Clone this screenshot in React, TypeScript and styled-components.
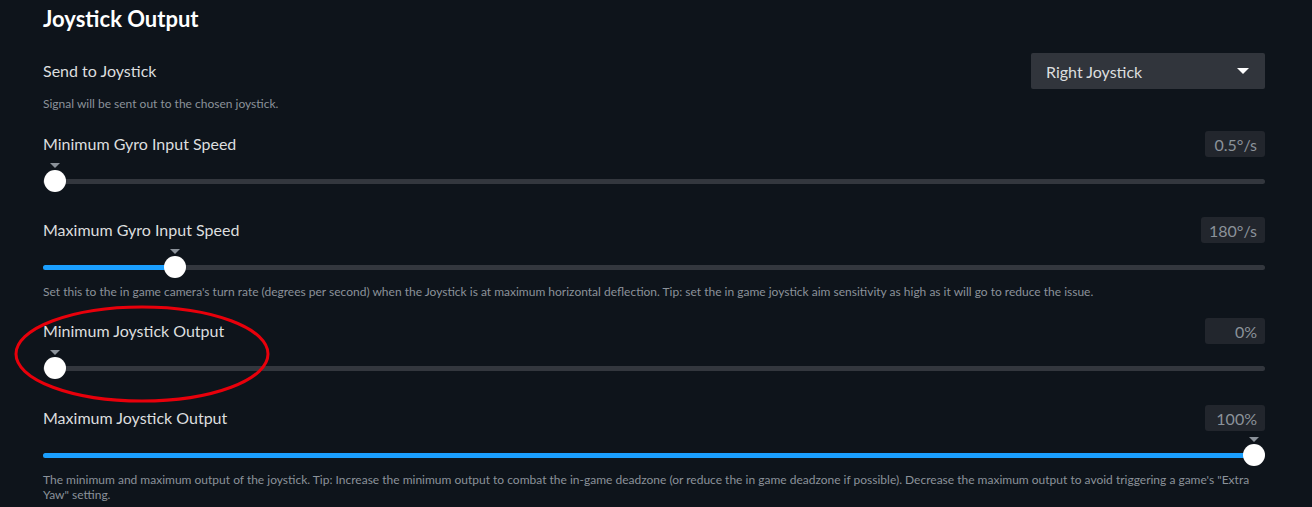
import React from "react";
import styled, { createGlobalStyle } from "styled-components";

const GlobalStyle = createGlobalStyle`
  html, body { margin: 0; padding: 0; background: #0e141b; }
  body { font-family: "Lato", "Noto Sans", sans-serif; }
  #root { width: 1312px; height: 507px; overflow: hidden; }
`;

const Page = styled.div`
  position: relative;
  width: 1312px;
  height: 507px;
  box-sizing: border-box;
  padding: 0 47px 0 43px;
  background: #0e141b;
  display: flex;
  flex-direction: column;
`;

const Title = styled.h1`
  margin: 0;
  padding-top: 6px;
  font-size: 22px;
  line-height: 26px;
  font-weight: 700;
  color: #ffffff;
`;

const Block = styled.section<{ $top: number }>`
  display: flex;
  flex-direction: column;
  margin-top: ${(p) => p.$top}px;
`;

const HeaderRow = styled.div<{ $h: number }>`
  display: flex;
  align-items: center;
  justify-content: space-between;
  height: ${(p) => p.$h}px;
`;

const Label = styled.div`
  font-size: 16px;
  line-height: 20px;
  color: #dcdedf;
`;

const Desc = styled.div<{ $top: number }>`
  margin-top: ${(p) => p.$top}px;
  font-size: 12px;
  line-height: 15px;
  color: #8b929a;
`;

const Dropdown = styled.div`
  width: 234px;
  height: 36px;
  box-sizing: border-box;
  padding: 0 16px 0 15px;
  background: #31353c;
  border-radius: 2px;
  display: flex;
  align-items: center;
  justify-content: space-between;
  font-size: 16px;
  color: #dcdedf;
`;

const Caret = styled.div`
  width: 0;
  height: 0;
  border-left: 6px solid transparent;
  border-right: 6px solid transparent;
  border-top: 6px solid #ffffff;
`;

const ValueBox = styled.div`
  min-width: 60px;
  height: 26px;
  box-sizing: border-box;
  padding: 0 8px;
  background: #22262d;
  border-radius: 3px;
  display: flex;
  align-items: center;
  justify-content: flex-end;
  font-size: 16px;
  color: #8b929a;
`;

const SliderArea = styled.div`
  position: relative;
  margin-top: 13px;
  height: 22px;
  display: flex;
  align-items: center;
`;

const Track = styled.div`
  position: relative;
  flex: 1;
  height: 5px;
  border-radius: 3px;
  background: #33373e;
`;

const Fill = styled.div`
  position: absolute;
  left: 0;
  top: 0;
  bottom: 0;
  border-radius: 3px;
  background: #1a9fff;
`;

const Thumb = styled.div`
  position: absolute;
  top: 0;
  width: 22px;
  height: 22px;
  margin-left: -11px;
  border-radius: 50%;
  background: #ffffff;
  &::before {
    content: "";
    position: absolute;
    left: 6px;
    top: -7px;
    border-left: 5px solid transparent;
    border-right: 5px solid transparent;
    border-top: 5px solid #8b929a;
  }
`;

const Annotation = styled.svg`
  position: absolute;
  left: 0;
  top: 0;
  pointer-events: none;
`;

const TRACK_W = 1222;

function Slider({ frac }: { frac: number }) {
  const center = 12 + frac * (TRACK_W - 23);
  return (
    <SliderArea>
      <Track>
        <Fill style={{ width: frac > 0 ? center : 0 }} />
      </Track>
      <Thumb style={{ left: center }} />
    </SliderArea>
  );
}

function SliderSetting({
  label,
  value,
  frac,
  top,
  desc,
}: {
  label: string;
  value: string;
  frac: number;
  top: number;
  desc?: string;
}) {
  return (
    <Block $top={top}>
      <HeaderRow $h={26}>
        <Label>{label}</Label>
        <ValueBox>{value}</ValueBox>
      </HeaderRow>
      <Slider frac={frac} />
      {desc && <Desc $top={6}>{desc}</Desc>}
    </Block>
  );
}

export default function App() {
  return (
    <>
      <GlobalStyle />
      <Page>
        <Title>Joystick Output</Title>
        <Block $top={21}>
          <HeaderRow $h={36}>
            <Label>Send to Joystick</Label>
            <Dropdown>
              <span>Right Joystick</span>
              <Caret />
            </Dropdown>
          </HeaderRow>
          <Desc $top={7}>Signal will be sent out to the chosen joystick.</Desc>
        </Block>
        <SliderSetting label="Minimum Gyro Input Speed" value="0.5°/s" frac={0} top={20} />
        <SliderSetting
          label="Maximum Gyro Input Speed"
          value="180°/s"
          frac={0.1}
          top={25}
          desc="Set this to the in game camera's turn rate (degrees per second) when the Joystick is at maximum horizontal deflection. Tip: set the in game joystick aim sensitivity as high as it will go to reduce the issue."
        />
        <SliderSetting label="Minimum Joystick Output" value="0%" frac={0} top={19} />
        <SliderSetting
          label="Maximum Joystick Output"
          value="100%"
          frac={1}
          top={26}
          desc={`The minimum and maximum output of the joystick. Tip: Increase the minimum output to combat the in-game deadzone (or reduce the in game deadzone if possible). Decrease the maximum output to avoid triggering a game's "Extra Yaw" setting.`}
        />
        <Annotation width={1312} height={507}>
          <ellipse cx={142} cy={354} rx={126} ry={47} fill="none" stroke="#e8000b" strokeWidth={3} />
        </Annotation>
      </Page>
    </>
  );
}
